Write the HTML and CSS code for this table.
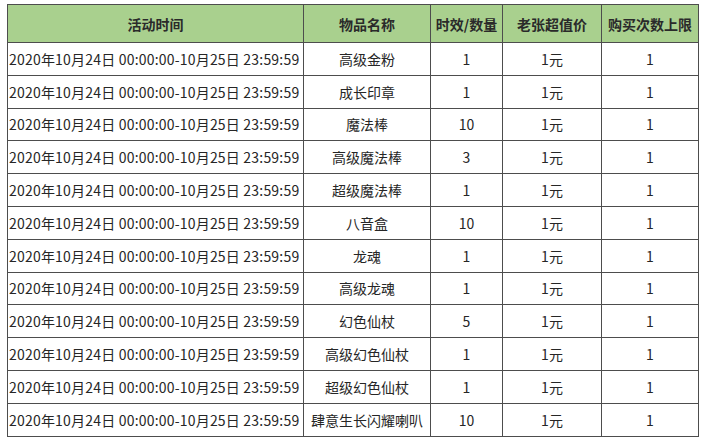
FILE: index.html
```html
<!DOCTYPE html>
<html lang="zh">
<head>
<meta charset="utf-8">
<link rel="stylesheet" href="styles.css">
</head>
<body>
<table class="tbl">
  <colgroup>
    <col class="c1"><col class="c2"><col class="c3"><col class="c4"><col class="c5">
  </colgroup>
  <thead>
    <tr><th>活动时间</th><th>物品名称</th><th>时效/数量</th><th>老张超值价</th><th>购买次数上限</th></tr>
  </thead>
  <tbody>
    <tr><td class="time">2020年10月24日 00:00:00-10月25日 23:59:59</td><td>高级金粉</td><td>1</td><td>1元</td><td>1</td></tr>
    <tr><td class="time">2020年10月24日 00:00:00-10月25日 23:59:59</td><td>成长印章</td><td>1</td><td>1元</td><td>1</td></tr>
    <tr><td class="time">2020年10月24日 00:00:00-10月25日 23:59:59</td><td>魔法棒</td><td>10</td><td>1元</td><td>1</td></tr>
    <tr><td class="time">2020年10月24日 00:00:00-10月25日 23:59:59</td><td>高级魔法棒</td><td>3</td><td>1元</td><td>1</td></tr>
    <tr><td class="time">2020年10月24日 00:00:00-10月25日 23:59:59</td><td>超级魔法棒</td><td>1</td><td>1元</td><td>1</td></tr>
    <tr><td class="time">2020年10月24日 00:00:00-10月25日 23:59:59</td><td>八音盒</td><td>10</td><td>1元</td><td>1</td></tr>
    <tr><td class="time">2020年10月24日 00:00:00-10月25日 23:59:59</td><td>龙魂</td><td>1</td><td>1元</td><td>1</td></tr>
    <tr><td class="time">2020年10月24日 00:00:00-10月25日 23:59:59</td><td>高级龙魂</td><td>1</td><td>1元</td><td>1</td></tr>
    <tr><td class="time">2020年10月24日 00:00:00-10月25日 23:59:59</td><td>幻色仙杖</td><td>5</td><td>1元</td><td>1</td></tr>
    <tr><td class="time">2020年10月24日 00:00:00-10月25日 23:59:59</td><td>高级幻色仙杖</td><td>1</td><td>1元</td><td>1</td></tr>
    <tr><td class="time">2020年10月24日 00:00:00-10月25日 23:59:59</td><td>超级幻色仙杖</td><td>1</td><td>1元</td><td>1</td></tr>
    <tr><td class="time">2020年10月24日 00:00:00-10月25日 23:59:59</td><td>肆意生长闪耀喇叭</td><td>10</td><td>1元</td><td>1</td></tr>
  </tbody>
</table>
</body>
</html>
```

FILE: styles.css
```css
html, body {
  margin: 0;
  padding: 0;
  background: #ffffff;
}
body {
  padding: 4px 0 0 7px;
  font-family: "Noto Sans CJK SC", "Noto Sans", sans-serif;
  color: #262626;
}
.tbl {
  border-collapse: collapse;
  table-layout: fixed;
  width: 691px;
}
.c1 { width: 296px; }
.c2 { width: 127px; }
.c3 { width: 72px; }
.c4 { width: 99px; }
.c5 { width: 97px; }
.tbl th, .tbl td {
  border: 1.5px solid #4d4d4d;
  text-align: center;
  padding: 0;
  white-space: nowrap;
  overflow: hidden;
}
.tbl th {
  background: #a9d08e;
  height: 37px;
  font-size: 14px;
  font-weight: 700;
  color: #2a2a2a;
}
.tbl td {
  height: 31.8px;
  font-size: 14px;
}
.tbl td.time {
  text-align: left;
  padding-left: 1px;
  font-size: 14px;
  letter-spacing: 0.2px;
}
```
